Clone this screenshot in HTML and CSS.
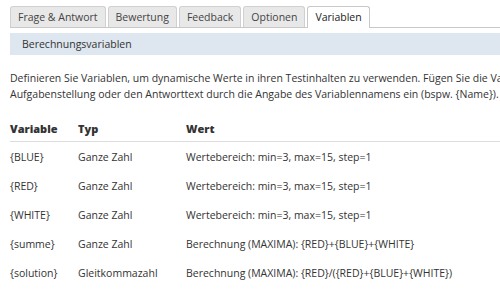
FILE: index.html
```html
<!DOCTYPE html>
<html lang="de">
  <head>
    <meta charset="UTF-8" />
    <meta name="viewport" content="width=device-width, initial-scale=1.0" />
    <title>Variablen</title>
    <link rel="stylesheet" href="styles.css">
  </head>
  <body>
    <ul class="tabs">
      <li class="tab">Frage &amp; Antwort</li>
      <li class="tab">Bewertung</li>
      <li class="tab">Feedback</li>
      <li class="tab">Optionen</li>
      <li class="tab active">Variablen</li>
    </ul>

    <div class="section-title">Berechnungsvariablen</div>

    <p class="intro">
      Definieren Sie Variablen, um dynamische Werte in ihren Testinhalten zu verwenden. Fügen Sie die Variablen in die<br />
      Aufgabenstellung oder den Antworttext durch die Angabe des Variablennamens ein (bspw. {Name}).
    </p>

    <table class="vars">
      <thead>
        <tr>
          <th class="col-name">Variable</th>
          <th class="col-type">Typ</th>
          <th>Wert</th>
        </tr>
      </thead>
      <tbody>
        <tr>
          <td>{BLUE}</td>
          <td>Ganze Zahl</td>
          <td>Wertebereich: min=3, max=15, step=1</td>
        </tr>
        <tr>
          <td>{RED}</td>
          <td>Ganze Zahl</td>
          <td>Wertebereich: min=3, max=15, step=1</td>
        </tr>
        <tr>
          <td>{WHITE}</td>
          <td>Ganze Zahl</td>
          <td>Wertebereich: min=3, max=15, step=1</td>
        </tr>
        <tr>
          <td>{summe}</td>
          <td>Ganze Zahl</td>
          <td>Berechnung (MAXIMA): {RED}+{BLUE}+{WHITE}</td>
        </tr>
        <tr>
          <td>{solution}</td>
          <td>Gleitkommazahl</td>
          <td>Berechnung (MAXIMA): {RED}/({RED}+{BLUE}+{WHITE})</td>
        </tr>
      </tbody>
    </table>
  </body>
</html>
```

FILE: styles.css
```css
body {
  margin: 0;
  padding: 6px 0 0 10px;
  font-family: "Open Sans", sans-serif;
  font-size: 10.5px;
  color: #333;
  background-color: white;
  width: 700px;
  overflow: hidden;
}

html {
  overflow: hidden;
}

.tabs {
  display: flex;
  gap: 2px;
  list-style: none;
  margin: 0;
  padding: 0;
  border-bottom: 1px solid #c8c8c8;
  height: 21px;
}

.tab {
  height: 20px;
  line-height: 20px;
  padding: 0 7px;
  background-color: #e8e8e8;
  border: 1px solid #d0d0d0;
  border-bottom: none;
  border-radius: 3px 3px 0 0;
  color: #444;
}

.tab.active {
  background-color: white;
  border-color: #c8c8c8;
  height: 21px;
  color: #222;
}

.section-title {
  margin-top: 5px;
  height: 22px;
  line-height: 22px;
  padding-left: 12px;
  background-color: #dee7ef;
  color: #333;
}

.intro {
  margin: 15px 0 0 0;
  line-height: 16px;
  white-space: nowrap;
}

.vars {
  margin-top: 14px;
  width: 100%;
  border-collapse: collapse;
}

.vars th {
  text-align: left;
  font-weight: 800;
  font-size: 11px;
  color: #333;
  height: 25px;
  padding: 0;
  border-bottom: 1px solid #ddd;
}

.col-name {
  width: 68px;
}

.col-type {
  width: 108px;
}

.vars td {
  height: 29px;
  padding: 0;
  white-space: nowrap;
}
```
